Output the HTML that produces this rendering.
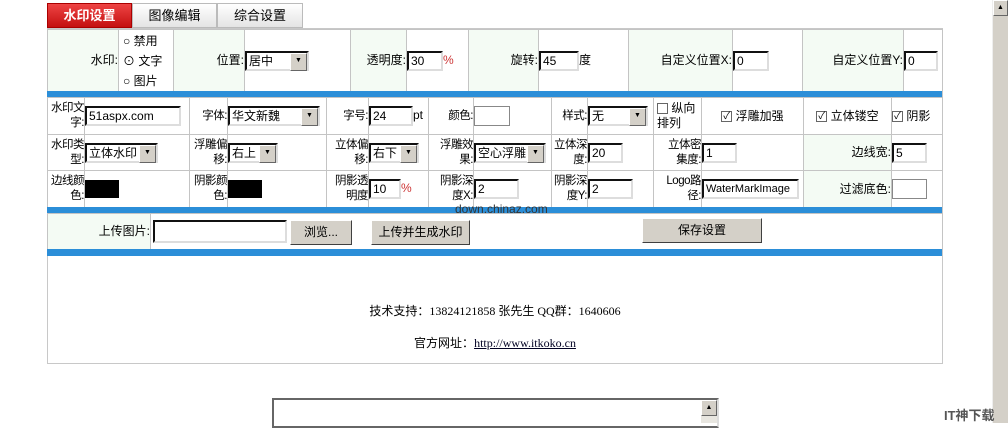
<!DOCTYPE html>
<html><head><meta charset="utf-8">
<style>
*{box-sizing:border-box;margin:0;padding:0}
body{width:1008px;height:423px;background:#fff;position:relative;overflow:hidden;font:12px "Liberation Sans","WenQuanYi Zen Hei","Noto Sans CJK SC",sans-serif;color:#000}
.a{position:absolute}
.tab{position:absolute;top:3px;height:25px;border:1px solid #bbb;background:linear-gradient(#fff,#e4e4e4);text-align:center;line-height:23px;font-size:13px}
table{position:absolute;left:47px;width:895px;border-collapse:collapse;table-layout:fixed}
td{border:1px solid #c4c4c4;padding:0;vertical-align:middle;font-size:12px;line-height:15px;white-space:nowrap;overflow:hidden}
.l{text-align:right;background:#f4fbf4}
.w{background:#fff}
.t{text-align:right;letter-spacing:-0.5px;font-size:11.5px}
.in{display:inline-block;height:20px;border:2px inset #ddd;border-top-color:#666;border-left-color:#666;background:#fff;vertical-align:middle;padding-left:2px;line-height:16px;font-size:12px;overflow:hidden}
.sel{display:inline-block;height:20px;border:2px inset #ddd;border-top-color:#666;border-left-color:#666;background:#fff;vertical-align:middle;position:relative;padding-left:2px;line-height:16px;font-size:12px}
.sel:after{content:"▼";position:absolute;right:0;top:0;width:15px;height:16px;background:#d4d0c8;border:1px solid;border-color:#fff #666 #666 #fff;font-size:7px;line-height:14px;text-align:center}
.cb{display:inline-block;width:11px;height:11px;border:1px solid #666;background:#fff;vertical-align:middle;font-size:10px;line-height:9px;text-align:center}
.bar{position:absolute;left:47px;width:895px;height:6px;background:#2b8ed8}
.btn{position:absolute;height:25px;background:#d4d0c8;border:1px solid;border-color:#fff #404040 #404040 #fff;text-align:center;line-height:22px;font-size:12px}
.blk{display:inline-block;width:34px;height:18px;background:#000;vertical-align:middle}
.box{display:inline-block;height:20px;border:1px solid #888;background:#fff;vertical-align:middle}
.r{color:#c33}
</style></head><body>
<div class="a" style="left:47px;top:28px;width:896px;height:336px;border:1px solid #c8c8c8"></div>
<div class="tab" style="left:47px;width:85px;background:linear-gradient(#e44,#c41010);color:#fff;font-weight:bold;border-color:#a00">水印设置</div>
<div class="tab" style="left:132px;width:85px">图像编辑</div>
<div class="tab" style="left:217px;width:86px">综合设置</div>

<table style="top:29px;height:62px">
<colgroup><col style="width:71px"><col style="width:55px"><col style="width:71px"><col style="width:106px"><col style="width:56px"><col style="width:62px"><col style="width:70px"><col style="width:90px"><col style="width:104px"><col style="width:70px"><col style="width:101px"><col style="width:39px"></colgroup>
<tr style="height:62px"><td class="l">水印:</td><td class="w" style="line-height:20px;padding-left:4px">○ 禁用<br>⊙ 文字<br>○ 图片</td>
<td class="l">位置:</td><td class="w"><span class="sel" style="width:64px">居中</span></td>
<td class="l">透明度:</td><td class="w"><span class="in" style="width:36px">30</span><span class="r">%</span></td>
<td class="l">旋转:</td><td class="w"><span class="in" style="width:40px">45</span>度</td>
<td class="l">自定义位置X:</td><td class="w"><span class="in" style="width:36px">0</span></td>
<td class="l">自定义位置Y:</td><td class="w"><span class="in" style="width:34px">0</span></td></tr>
</table>
<div class="bar" style="top:91px"></div>

<table style="top:97px;height:110px">
<colgroup><col style="width:37px"><col style="width:105px"><col style="width:38px"><col style="width:99px"><col style="width:42px"><col style="width:60px"><col style="width:45px"><col style="width:78px"><col style="width:36px"><col style="width:66px"><col style="width:48px"><col style="width:102px"><col style="width:88px"><col style="width:51px"></colgroup>
<tr style="height:37px"><td class="w t">水印文<br>字:</td><td class="w"><span class="in" style="width:96px">51aspx.com</span></td>
<td class="w t">字体:</td><td class="w"><span class="sel" style="width:92px">华文新魏</span></td>
<td class="w t">字号:</td><td class="w"><span class="in" style="width:44px">24</span>pt</td>
<td class="w t">颜色:</td><td class="w"><span class="box" style="width:36px"></span></td>
<td class="w t">样式:</td><td class="w"><span class="sel" style="width:60px">无</span></td>
<td class="w" style="padding-left:3px"><span class="cb"></span> 纵向<br>排列</td>
<td class="w" style="text-align:center"><span class="cb">✓</span> 浮雕加强</td>
<td class="w" style="text-align:center"><span class="cb">✓</span> 立体镂空</td>
<td class="w"><span class="cb">✓</span> 阴影</td></tr>
<tr style="height:36px"><td class="w t">水印类<br>型:</td><td class="w"><span class="sel" style="width:73px">立体水印</span></td>
<td class="w t">浮雕偏<br>移:</td><td class="w"><span class="sel" style="width:50px">右上</span></td>
<td class="w t">立体偏<br>移:</td><td class="w"><span class="sel" style="width:50px">右下</span></td>
<td class="w t">浮雕效<br>果:</td><td class="w"><span class="sel" style="width:72px">空心浮雕</span></td>
<td class="w t">立体深<br>度:</td><td class="w"><span class="in" style="width:35px">20</span></td>
<td class="w t">立体密<br>集度:</td><td class="w"><span class="in" style="width:35px">1</span></td>
<td class="l">边线宽:</td><td class="w"><span class="in" style="width:35px">5</span></td></tr>
<tr style="height:37px"><td class="w t">边线颜<br>色:</td><td class="w"><span class="blk"></span></td>
<td class="w t">阴影颜<br>色:</td><td class="w"><span class="blk"></span></td>
<td class="w t">阴影透<br>明度</td><td class="w"><span class="in" style="width:32px">10</span><span class="r">%</span></td>
<td class="w t">阴影深<br>度X:</td><td class="w"><span class="in" style="width:45px">2</span></td>
<td class="w t">阴影深<br>度Y:</td><td class="w"><span class="in" style="width:45px">2</span></td>
<td class="w t">Logo路<br>径:</td><td class="w"><span class="in" style="width:97px;font-size:11px">WaterMarkImage</span></td>
<td class="l">过滤底色:</td><td class="w"><span class="box" style="width:35px"></span></td></tr>
</table>
<div class="bar" style="top:207px"></div>
<div class="a" style="left:455px;top:202px;font-size:12px;color:#333">down.chinaz.com</div>

<table style="top:213px;height:36px">
<colgroup><col style="width:103px"><col style="width:792px"></colgroup>
<tr style="height:36px"><td class="l">上传图片:</td><td class="w"></td></tr></table>
<div class="a in" style="left:153px;top:220px;width:134px;height:23px"></div>
<div class="btn" style="left:290px;top:220px;width:62px">浏览...</div>
<div class="btn" style="left:371px;top:220px;width:99px">上传并生成水印</div>
<div class="btn" style="left:642px;top:218px;width:120px">保存设置</div>
<div class="bar" style="top:249px;height:7px"></div>

<div class="a" style="left:0;width:990px;top:302px;text-align:center;font:12px 'Liberation Serif','WenQuanYi Zen Hei',serif">技术支持：13824121858 张先生 QQ群：1640606</div>
<div class="a" style="left:0;width:990px;top:334px;text-align:center;font:12px 'Liberation Serif','WenQuanYi Zen Hei',serif">官方网址：<u style="color:#002">http://www.itkoko.cn</u></div>

<div class="a" style="left:272px;top:398px;width:447px;height:30px;border:2px solid #666;border-right-color:#ddd;background:#fff"></div>
<div class="a" style="left:701px;top:400px;width:16px;height:23px;background:#e8e6e0"><div style="height:16px;background:#d4d0c8;border:1px solid;border-color:#fff #666 #666 #fff;font-size:7px;text-align:center;line-height:13px">▲</div></div>

<div class="a" style="left:992px;top:0;width:16px;height:423px;background:#d4d0c8;border-left:1px solid #eee"><div style="height:16px;border:1px solid;border-color:#fff #666 #666 #fff;font-size:7px;text-align:center;line-height:13px">▲</div></div>
<div class="a" style="left:944px;top:405px;font-size:13px;font-weight:bold;color:#555">IT神下载</div>
</body></html>
